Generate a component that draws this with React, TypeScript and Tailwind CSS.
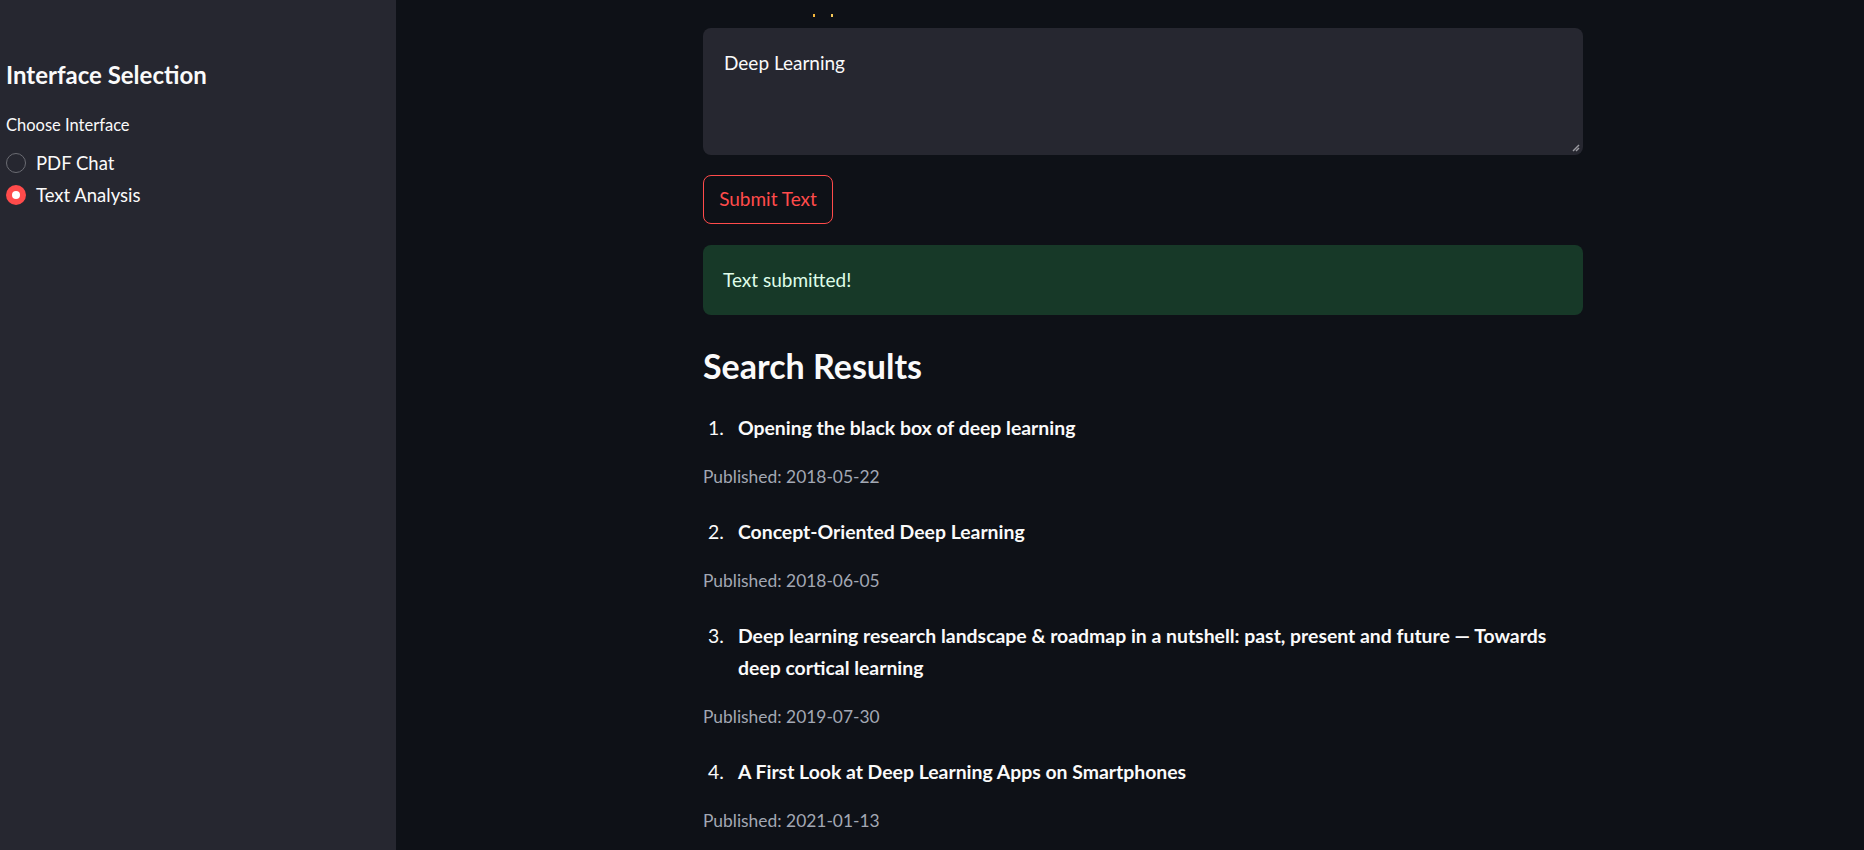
import React from "react";

const results = [
  { title: "Opening the black box of deep learning", date: "2018-05-22" },
  { title: "Concept-Oriented Deep Learning", date: "2018-06-05" },
  {
    title:
      "Deep learning research landscape & roadmap in a nutshell: past, present and future — Towards deep cortical learning",
    date: "2019-07-30",
  },
  { title: "A First Look at Deep Learning Apps on Smartphones", date: "2021-01-13" },
];

export default function App() {
  return (
    <div
      className="flex h-[850px] w-[1864px] overflow-hidden text-[#fafafa]"
      style={{ fontFamily: "'Source Sans Pro', Lato, 'Noto Sans', sans-serif" }}
    >
      {/* Sidebar */}
      <aside className="w-[396px] shrink-0 bg-[#262730] pl-[6px] pt-[61px]">
        <h3 className="text-[24px] font-bold leading-[28px]">Interface Selection</h3>
        <div className="mt-[25px] text-[16.5px] leading-[22px]">Choose Interface</div>
        <div className="mt-[17px] flex flex-col gap-[12px]">
          <div className="flex items-center gap-[10px] h-[20px]">
            <span className="h-[20px] w-[20px] rounded-full border border-[#6b6c73] bg-[#262730]" />
            <span className="text-[18.5px] leading-[20px]">PDF Chat</span>
          </div>
          <div className="flex items-center gap-[10px] h-[20px]">
            <span className="flex h-[20px] w-[20px] items-center justify-center rounded-full bg-[#ff4b4b]">
              <span className="h-[8px] w-[8px] rounded-full bg-white" />
            </span>
            <span className="text-[18.5px] leading-[20px]">Text Analysis</span>
          </div>
        </div>
      </aside>

      {/* Main */}
      <main className="flex-1 bg-[#0e1117] pl-[307px]">
        <div className="w-[880px]">
          <div className="relative h-[28px]">
            <span className="absolute left-[110px] top-[14px] h-[3px] w-[2px] bg-[#f5b73b]" />
            <span className="absolute left-[128px] top-[14px] h-[3px] w-[2px] bg-[#f5c95b]" />
          </div>

          <div className="relative h-[127px] rounded-[8px] bg-[#262730] px-[21px] pt-[20px] text-[19px] leading-[30px]">
            Deep Learning
            <svg
              className="absolute bottom-[3px] right-[3px]"
              width="9"
              height="9"
              viewBox="0 0 9 9"
            >
              <line x1="8" y1="2" x2="2" y2="8" stroke="#9a9aa0" strokeWidth="1.4" />
              <line x1="8" y1="5" x2="5" y2="8" stroke="#9a9aa0" strokeWidth="1.4" />
            </svg>
          </div>

          <button className="mt-[20px] flex h-[49px] w-[130px] items-center justify-center rounded-[8px] border border-[#ff4b4b] bg-[#0e1117] text-[19px] text-[#ff4b4b]">
            Submit Text
          </button>

          <div className="mt-[21px] flex h-[70px] items-center rounded-[8px] bg-[#173928] px-[20px] text-[19px] text-[#dffde9]">
            Text submitted!
          </div>

          <h2 className="mt-[28px] text-[34px] font-bold leading-[46px]">Search Results</h2>

          <ol className="mt-[23px]">
            {results.map((r, i) => (
              <li key={i} className="mb-[26px]">
                <div className="flex text-[19.4px] font-bold leading-[32px]">
                  <span className="w-[35px] shrink-0 pl-[5px] font-normal">{i + 1}.</span>
                  <span>{r.title}</span>
                </div>
                <div className="mt-[20px] text-[17.4px] leading-[26px] text-[#a3a8b4]">
                  Published: {r.date}
                </div>
              </li>
            ))}
          </ol>
        </div>
      </main>
    </div>
  );
}
